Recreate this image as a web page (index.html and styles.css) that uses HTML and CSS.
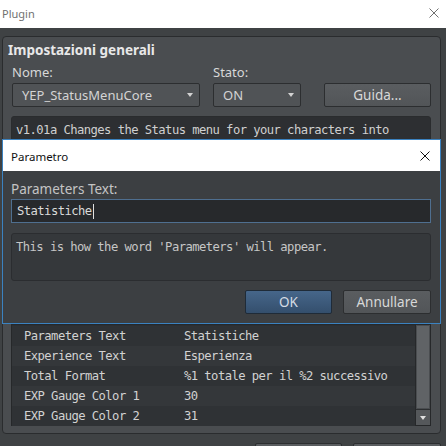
FILE: index.html
```html
<!DOCTYPE html>
<html lang="it">
<head>
<meta charset="utf-8">
<title>Plugin</title>
<link rel="stylesheet" href="styles.css">
</head>
<body>
<div class="window">
  <header class="titlebar">
    <span class="title">Plugin</span>
    <svg class="close" width="10" height="10" viewBox="0 0 10 10"><path d="M0.5 0.5L9.5 9.5M9.5 0.5L0.5 9.5"/></svg>
  </header>
  <main class="win-body">
    <section class="group">
      <h1 class="group-title">Impostazioni generali</h1>
      <div class="form">
        <div class="fields">
          <div class="field field-name">
            <label class="label">Nome:</label>
            <div class="combo"><span>YEP_StatusMenuCore</span><i class="arrow"></i></div>
          </div>
          <div class="field field-state">
            <label class="label">Stato:</label>
            <div class="combo"><span>ON</span><i class="arrow"></i></div>
          </div>
          <button class="btn btn-help">Guida...</button>
        </div>
        <div class="desc mono">v1.01a Changes the Status menu for your characters into</div>
        <div class="param-list">
          <div class="rows mono">
            <div class="row"><span class="key">Parameters Text</span><span>Statistiche</span></div>
            <div class="row"><span class="key">Experience Text</span><span>Esperienza</span></div>
            <div class="row"><span class="key">Total Format</span><span>%1 totale per il %2 successivo</span></div>
            <div class="row"><span class="key">EXP Gauge Color 1</span><span>30</span></div>
            <div class="row"><span class="key">EXP Gauge Color 2</span><span>31</span></div>
          </div>
          <div class="scrollbar">
            <div class="thumb"></div>
            <div class="step-down"><i class="arrow"></i></div>
          </div>
        </div>
      </div>
    </section>
    <div class="footer">
      <button class="btn btn-footer">&nbsp;</button>
      <button class="btn btn-footer btn-footer-last">&nbsp;</button>
    </div>
  </main>
</div>

<div class="dialog">
  <header class="dialog-titlebar">
    <span class="dialog-title">Parametro</span>
    <svg class="dialog-close" width="10" height="10" viewBox="0 0 10 10"><path d="M0.5 0.5L9.5 9.5M9.5 0.5L0.5 9.5"/></svg>
  </header>
  <div class="dialog-body">
    <label class="dialog-label">Parameters Text:</label>
    <div class="input mono"><span>Statistiche</span><i class="caret"></i></div>
    <div class="note mono">This is how the word 'Parameters' will appear.</div>
    <div class="dialog-actions">
      <button class="btn btn-primary">OK</button>
      <button class="btn btn-cancel">Annullare</button>
    </div>
  </div>
</div>
</body>
</html>
```

FILE: styles.css
```css
* { box-sizing: border-box; }

html, body {
  margin: 0;
  padding: 0;
}

body {
  width: 446px;
  height: 446px;
  overflow: hidden;
  background: #3f4244;
  font-family: "Noto Sans", "Open Sans", sans-serif;
  font-size: 13px;
  color: #d6d6d6;
  position: relative;
}

/* condensed sans mono used by the text panes and the parameter table */
.mono {
  font-family: "DejaVu Sans Mono", "Liberation Mono", monospace;
  font-size: 12.2px;
  letter-spacing: -0.56px;
}

/* ---------- main window ---------- */
.titlebar {
  height: 28px;
  background: #ffffff;
  display: flex;
  align-items: center;
  justify-content: space-between;
  padding: 0 7px 2px 2px;
}

.title {
  font-size: 11px;
  color: #707070;
}

.close path {
  stroke: #707070;
  stroke-width: 1;
  fill: none;
}

.win-body {
  padding: 8px 5px 0 2px;
  height: 418px;
}

.group {
  border: 1px solid #2a2c2e;
  border-radius: 4px;
  background: #4a4d50;
  padding: 5px 9px 7px 0;
}

.group-title {
  margin: 0 0 6px 5px;
  font-size: 13.5px;
  line-height: 16px;
  font-weight: 700;
  color: #e8e8e8;
}

.form {
  padding-left: 8px;
}

.fields {
  display: flex;
  align-items: flex-end;
  padding-left: 1px;
}

.field {
  display: flex;
  flex-direction: column;
}

.field-name { width: 188px; margin-right: 13px; }
.field-state { width: 88px; margin-right: 23px; }

.label {
  line-height: 16px;
  margin-bottom: 3px;
  color: #d8d8d8;
}

.combo {
  height: 24px;
  border: 1px solid #2c2e30;
  border-radius: 2px;
  background: #505356;
  display: flex;
  align-items: center;
  justify-content: space-between;
  padding: 0 6px 0 9px;
  color: #d4d4d4;
}

.arrow {
  width: 0;
  height: 0;
  border-left: 3.5px solid transparent;
  border-right: 3.5px solid transparent;
  border-top: 4px solid #d2d2d2;
}

.btn {
  font-family: "Noto Sans", "Open Sans", sans-serif;
  font-size: 13.5px;
  height: 24px;
  border: 1px solid #2c2e30;
  border-radius: 2px;
  background: linear-gradient(#5a5d60, #525558);
  color: #d8d8d8;
  padding: 0;
  line-height: 20px;
}

.btn-help { flex: 1; }

.desc {
  margin-top: 9px;
  height: 200px;
  border: 1px solid #2a2c2e;
  border-radius: 3px;
  background: #2d2f32;
  padding: 5px 4px;
  line-height: 16px;
  color: #d0d0d0;
  white-space: nowrap;
}

.param-list {
  margin-top: 8px;
  height: 102px;
  border: 1px solid #26282a;
  background: #2c2f32;
  display: flex;
  padding-top: 1px;
}

.rows {
  flex: 1;
  color: #d2d2d2;
}

.row {
  height: 20px;
  display: grid;
  grid-template-columns: 160px 1fr;
  align-items: center;
  padding-left: 12px;
  white-space: nowrap;
}

.row:nth-child(odd) { background: #2f3235; }
.row:nth-child(even) { background: #34373a; }

.scrollbar {
  width: 15px;
  display: flex;
  flex-direction: column;
  background: #3a3d40;
  border-left: 1px solid #26282a;
  margin-top: -1px;
}

.thumb {
  flex: 1;
  background: #606366;
  border: 1px solid #4a4d50;
}

.step-down {
  height: 16px;
  background: #55585b;
  border-top: 1px solid #2c2e30;
  display: flex;
  align-items: center;
  justify-content: center;
}

.step-down .arrow {
  border-top-color: #e0e0e0;
}

.footer {
  display: flex;
  margin-top: 9px;
  padding-left: 253px;
  gap: 11px;
}

.btn-footer { width: 87px; }
.btn-footer-last { width: 88px; }

/* ---------- modal dialog over the window ---------- */
.dialog {
  position: absolute;
  left: 2px;
  top: 139px;
  width: 439px;
  height: 185px;
  border: 1px solid #3b82c0;
  background: #3c3f42;
  display: flex;
  flex-direction: column;
}

.dialog-titlebar {
  height: 31px;
  background: #ffffff;
  display: flex;
  align-items: center;
  justify-content: space-between;
  padding: 0 10px 0 8px;
}

.dialog-title {
  font-size: 11.5px;
  color: #111111;
  padding-top: 1px;
}

.dialog-close path {
  stroke: #111111;
  stroke-width: 1;
  fill: none;
}

.dialog-body {
  padding: 10px 9px 0 8px;
  display: flex;
  flex-direction: column;
}

.dialog-label {
  font-size: 13.5px;
  line-height: 16px;
  margin-bottom: 2px;
  color: #c4c4c4;
}

.input {
  height: 24px;
  border: 1px solid #4f6f90;
  background: #27292c;
  display: flex;
  align-items: center;
  padding-left: 5px;
  color: #dadada;
}

.caret {
  width: 1px;
  height: 15px;
  background: #e0e0e0;
  margin-left: 1px;
}

.note {
  margin-top: 10px;
  height: 48px;
  border: 1px solid #2b2d30;
  border-radius: 3px;
  background: #35383b;
  padding: 5px 4px;
  line-height: 16px;
  color: #c6c6c6;
}

.dialog-actions {
  margin-top: 9px;
  display: flex;
  justify-content: flex-end;
  gap: 11px;
}

.btn-primary {
  width: 87px;
  background: linear-gradient(#46668a, #344f6d);
  border-color: #1f2b38;
  color: #d4dce4;
}

.btn-cancel {
  width: 88px;
}
```
